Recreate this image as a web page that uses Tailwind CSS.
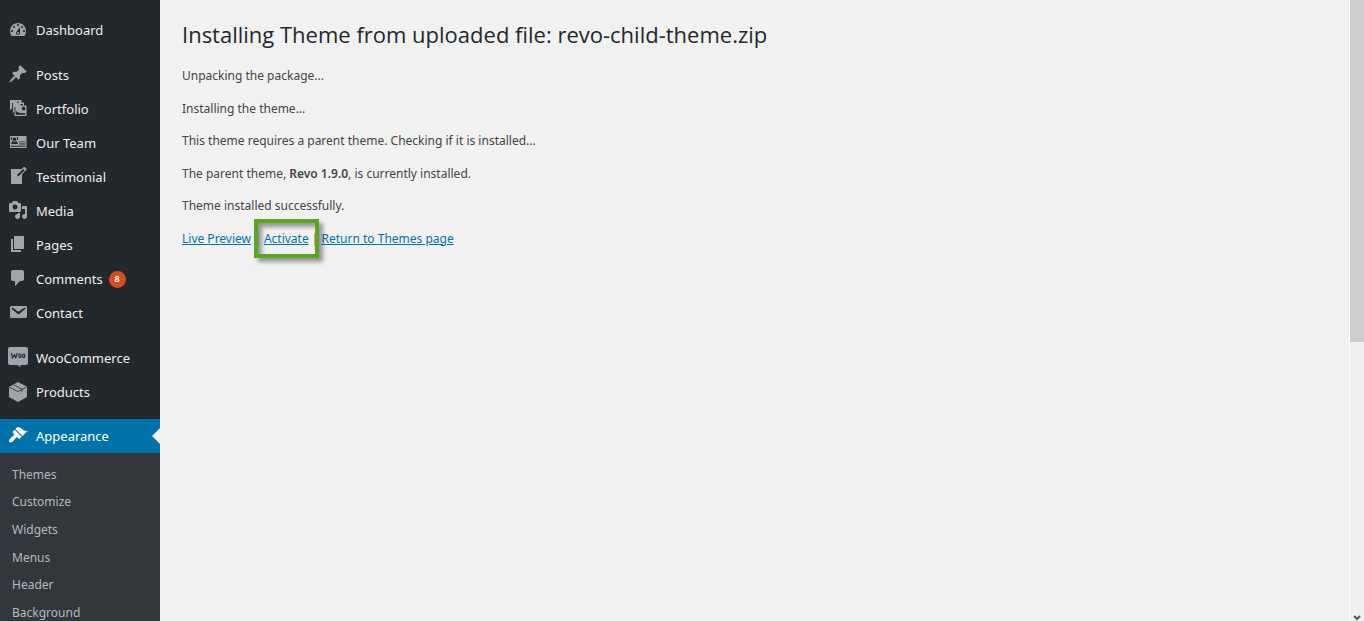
<!DOCTYPE html>
<html lang="en">
<head>
<meta charset="utf-8">
<title>Installing Theme</title>
<script src="https://cdn.jsdelivr.net/npm/@tailwindcss/browser@4"></script>
</head>
<body class="flex h-screen overflow-hidden bg-[#f1f1f1] font-['Noto_Sans','Open_Sans',sans-serif] text-[12px] text-[#444]">
<nav aria-label="Main menu" class="w-40 shrink-0 bg-[#23282d] pt-[14px] text-[13px] text-[#eee]">
  <ul>
    <li><a href="#" class="flex h-[34px] items-center gap-2 pl-2"><svg class="mb-[2px] size-5 fill-[#a0a5aa]" viewBox="0 0 20 20"><path d="M3.76 16h12.48c1.1-1.37 1.76-3.11 1.76-5 0-4.42-3.58-8-8-8s-8 3.58-8 8c0 1.89.66 3.63 1.76 5zM10 4c.55 0 1 .45 1 1s-.45 1-1 1-1-.45-1-1 .45-1 1-1zM6 6c.55 0 1 .45 1 1s-.45 1-1 1-1-.45-1-1 .45-1 1-1zm8 0c.55 0 1 .45 1 1s-.45 1-1 1-1-.45-1-1 .45-1 1-1zm-5.37 5.55L12 7v6c0 1.1-.9 2-2 2s-2-.9-2-2c0-.57.24-1.08.63-1.45zM4 10c.55 0 1 .45 1 1s-.45 1-1 1-1-.45-1-1 .45-1 1-1zm12 0c.55 0 1 .45 1 1s-.45 1-1 1-1-.45-1-1 .45-1 1-1zm-5 3c0-.55-.45-1-1-1s-1 .45-1 1 .45 1 1 1 1-.45 1-1z"/></svg>Dashboard</a></li>
  </ul>
  <ul class="mt-[11px]">
    <li><a href="#" class="flex h-[34px] items-center gap-2 pl-2"><svg class="mb-1 size-5 fill-[#a0a5aa]" viewBox="0 0 20 20"><path d="M10.44 3.02l1.82-1.82 6.36 6.35-1.83 1.82c-1.05-.68-2.48-.57-3.41.36l-.75.75c-.92.93-1.04 2.35-.35 3.41l-1.83 1.82-2.41-2.41-2.8 2.79c-.42.42-3.38 2.71-3.8 2.29s1.86-3.39 2.28-3.81l2.79-2.79L4.1 9.36l1.83-1.82c1.05.69 2.48.57 3.4-.36l.75-.75c.93-.92 1.05-2.35.36-3.41z"/></svg>Posts</a></li>
    <li><a href="#" class="flex h-[34px] items-center gap-2 pl-2"><svg class="mb-1 size-5 fill-[#a0a5aa]" viewBox="0 0 20 20"><path d="M2 2h11.500v2.500H16v3h2.500V18H6.500v-2.500H4V12H2z"/><g fill="#23282d"><path d="M3.200 10.500h.8v2H2.800V12zM4 5h.9v9.500H6.500v1H4zM6.500 9h.9v6.500h-.9zM8 13.500c1.500 0 2.500.5 3.700 1.800 1-.6 3-.3 5.500 0v1.400H8z"/><path d="M10 3.200l1.200 1-1.500.5-1-.7zM13 5.800l1.800.4.200 1.300h-1.500l-1.300-.8zM15.200 8.500l2 1v2.200l-1.400.8-1.800-1-.3-1.700z"/></g></svg>Portfolio</a></li>
    <li><a href="#" class="flex h-[34px] items-center gap-2 pl-2"><svg class="mb-1 size-5 fill-[#a0a5aa]" viewBox="0 0 20 20"><path d="M2 4h16.500v12H2z"/><g fill="#23282d"><circle cx="6.500" cy="7.200" r="1.800"/><path d="M3.200 12c0-2 .8-3 2.100-3l1.200 1.200L7.700 9c1.300 0 2.100 1 2.100 3zM3 5h1v3H3zM9 5h1v3H9zM11.200 9.400h6.300v.9h-6.300zM11.200 11.500h6.300v.9h-6.300zM3 13.700h14.500v1H3z"/></g></svg>Our Team</a></li>
    <li><a href="#" class="flex h-[34px] items-center gap-2 pl-2"><svg class="mb-1 size-5 fill-[#a0a5aa]" viewBox="0 0 20 20"><path d="M16.890 1.200l1.410 1.410c.39.39.39 1.020 0 1.410L14 8.330V18H3V3h10.670l1.800-1.800c.4-.39 1.030-.4 1.420 0zm-5.660 8.480l5.370-5.360-1.420-1.420-5.360 5.370-.71 2.120z"/></svg>Testimonial</a></li>
    <li><a href="#" class="flex h-[34px] items-center gap-2 pl-2"><svg class="mb-1 size-5 fill-[#a0a5aa]" viewBox="0 0 20 20"><path d="M13 11V4c0-.55-.45-1-1-1h-1.670L9 1H5L3.670 3H2c-.55 0-1 .45-1 1v7c0 .55.45 1 1 1h10c.55 0 1-.45 1-1zM7 4.500c1.380 0 2.500 1.120 2.500 2.500S8.380 9.500 7 9.500 4.500 8.380 4.500 7 5.620 4.500 7 4.500zM14 6h5v10.500c0 1.380-1.120 2.500-2.500 2.500S14 17.880 14 16.500s1.120-2.500 2.500-2.500c.17 0 .34.02.5.05V9h-3V6zm-4 8.050V13h2v3.500c0 1.380-1.120 2.500-2.500 2.500S7 17.880 7 16.500 8.120 14 9.500 14c.17 0 .34.02.5.05z"/></svg>Media</a></li>
    <li><a href="#" class="flex h-[34px] items-center gap-2 pl-2"><svg class="mb-1 size-5 fill-[#a0a5aa]" viewBox="0 0 20 20"><path d="M6 15V2h10v13H6zm-1 1h8v2H3V5h2v11z"/></svg>Pages</a></li>
    <li><a href="#" class="flex h-[34px] items-center gap-2 pl-2"><svg class="mb-1 size-5 fill-[#a0a5aa]" viewBox="0 0 20 20"><path d="M5 2h9c1.100 0 2 .9 2 2v7c0 1.100-.9 2-2 2h-2l-5 5v-5H5c-1.100 0-2-.9-2-2V4c0-1.100.9-2 2-2z"/></svg><span>Comments</span><span class="-ml-[2px] mb-[2px] flex size-[17px] items-center justify-center rounded-full bg-[#d54e21] text-[9px] font-semibold text-white">8</span></a></li>
    <li><a href="#" class="flex h-[34px] items-center gap-2 pl-2"><svg class="mb-1 size-5 fill-[#a0a5aa]" viewBox="0 0 20 20"><path d="M3.870 4h13.250C18.370 4 19 4.590 19 5.790v8.420c0 1.190-.63 1.790-1.880 1.790H3.870c-1.250 0-1.880-.6-1.880-1.790V5.790c0-1.200.63-1.790 1.880-1.790zm6.620 8.600l6.740-5.530c.24-.2.43-.66.13-1.070-.29-.41-.82-.42-1.170-.17l-5.700 3.860L4.800 5.830c-.35-.25-.88-.24-1.170.17-.3.41-.11.87.13 1.070z"/></svg>Contact</a></li>
  </ul>
  <ul class="mt-[11px]">
    <li><a href="#" class="flex h-[34px] items-center gap-2 pl-2"><svg class="mb-1 size-5 fill-[#a0a5aa]" viewBox="0 0 20 20"><path d="M2 0h16q2 0 2 2v14q0 2-2 2h-5.500v2l-3-2H2q-2 0-2-2V2Q0 0 2 0z"/><g fill="none" stroke="#2c3540" stroke-width="1.300" stroke-linejoin="round" stroke-linecap="round"><path d="M3.500 6.500l1 4.500L6.500 7.500 7.700 11 9.300 6.300"/><ellipse cx="12" cy="8.700" rx="1.100" ry="1.900"/><ellipse cx="15.700" cy="8.700" rx="1.100" ry="1.900"/></g></svg>WooCommerce</a></li>
    <li><a href="#" class="flex h-[34px] items-center gap-2 pl-2"><svg class="mb-[2px] size-5 fill-[#a0a5aa]" viewBox="0 0 20 20"><path d="M10 0l9 4.700v10.300L10 20l-9-5V4.700z"/><path d="M1.500 5.200L9.800 9.500 18.500 5.200M5.800 2.800L14 7.200v2.500" fill="none" stroke="#23282d" stroke-width=".8"/></svg>Products</a></li>
  </ul>
  <div class="mt-[9px] bg-[#32373c]">
    <a href="#" class="relative flex h-[34px] items-center gap-2 bg-[#0073aa] pl-2 pt-[2px] text-white"><svg class="mb-1 size-5 fill-white" viewBox="0 0 20 20"><path d="M14.480 11.060L7.410 3.990l1.500-1.500c.5-.56 2.300-.47 3.510.32 1.210.8 1.430 1.280 2.910 2.100 1.180.64 2.450 1.260 4.450.85zm-.71.71L6.700 4.700 4.930 6.470c-.39.39-.39 1.020 0 1.410l1.060 1.060c.39.39.39 1.030 0 1.420-.6.6-1.430 1.110-2.210 1.690-.35.26-.7.53-1.010.84C1.430 14.230.4 16.080 1.400 17.070c.99 1 2.840-.03 4.180-1.360.31-.31.58-.66.85-1.020.57-.78 1.080-1.610 1.690-2.210.39-.39 1.020-.39 1.410 0l1.060 1.060c.39.39 1.020.39 1.410 0z"/></svg>Appearance<span class="absolute right-0 top-[9px] border-y-8 border-r-8 border-y-transparent border-r-[#f1f1f1]"></span></a>
    <ul class="grid h-[174px] grid-rows-6 pt-2 pl-3 text-[12px] text-[#b4b9be]">
      <li class="flex items-center"><a href="#">Themes</a></li>
      <li class="flex items-center"><a href="#">Customize</a></li>
      <li class="flex items-center"><a href="#">Widgets</a></li>
      <li class="flex items-center"><a href="#">Menus</a></li>
      <li class="flex items-center"><a href="#">Header</a></li>
      <li class="flex items-center"><a href="#">Background</a></li>
    </ul>
  </div>
</nav>
<main class="min-w-0 flex-1 pl-[22px] pt-[18px]">
  <h1 class="font-['Open_Sans',sans-serif] text-[22px] leading-8 text-[#23282d]">Installing Theme from uploaded file: revo-child-theme.zip</h1>
  <div class="mt-[10px] grid h-[195px] grid-rows-6 items-center">
    <p>Unpacking the package...</p>
    <p>Installing the theme...</p>
    <p>This theme requires a parent theme. Checking if it is installed...</p>
    <p>The parent theme, <strong class="font-semibold">Revo 1.9.0</strong>, is currently installed.</p>
    <p>Theme installed successfully.</p>
    <p class="whitespace-nowrap"><a href="#" class="text-[#0073aa] underline">Live Preview</a> | <span class="relative"><a href="#" class="text-[#0073aa] underline">Activate</a><span class="pointer-events-none absolute -inset-x-[10px] -inset-y-[11px] border-4 border-[#5ba51f] shadow-[4px_4px_4px_#00000060,inset_4px_4px_4px_#00000060]"></span></span> | <a href="#" class="text-[#0073aa] underline">Return to Themes page</a></p>
  </div>
</main>
<div aria-hidden="true" class="flex w-[15px] shrink-0 flex-col justify-between border-l border-white bg-[#f0f0f0]">
  <div class="h-[55%] bg-[#cdcdcd]"></div>
  <svg class="mx-auto h-[6px] w-2" viewBox="0 0 8 6"><path d="M1 1l3 3 3-3" fill="none" stroke="#555" stroke-width="2"/></svg>
</div>
</body>
</html>
